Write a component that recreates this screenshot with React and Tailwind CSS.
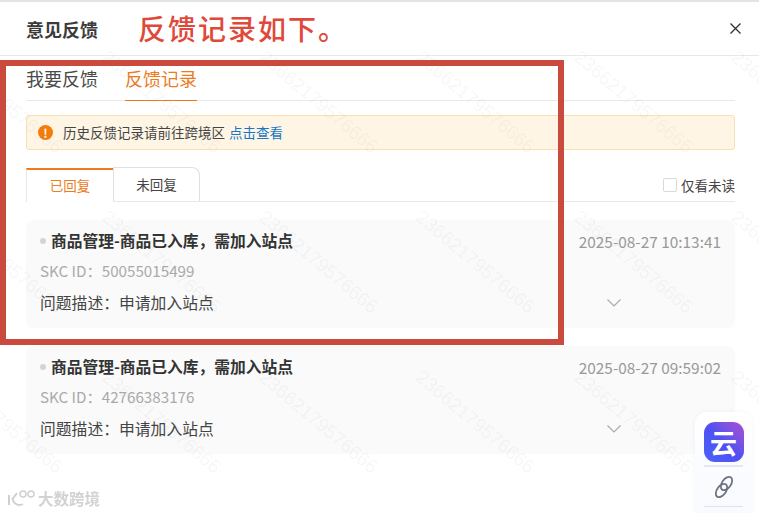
import React from "react";

const cards = [
  { id: "50055015499", time: "2025-08-27 10:13:41" },
  { id: "42766383176", time: "2025-08-27 09:59:02" },
];

// watermark grid: one label every 158px across and 160px down
const marks = [];
[47, 207, 367].forEach((top) => {
  [-47, 111, 268, 425, 583, 740].forEach((left) => marks.push({ top, left }));
});

const FeedbackCard = ({ id, time }) => (
  <div className="h-[108px] rounded-lg bg-[#fafafa] px-[14px] pt-[9px]">
    <div className="flex items-center justify-between">
      <div className="flex items-center">
        <span className="mr-[5px] h-[6px] w-[6px] rounded-full bg-[#d4d4d4]"></span>
        <span className="text-[15.75px] leading-[24px] font-bold text-[#333]">
          {"商品管理-商品已入库\uFF0C需加入站点"}
        </span>
      </div>
      <span className="text-[15.4px] leading-[24px] text-[#999]">{time}</span>
    </div>
    <div className="mt-[7px] text-[15.2px] leading-[20px] text-[#aaa]">
      {"SKC ID\uFF1A"}{id}
    </div>
    <div className="mt-[12px] flex items-center justify-between pr-[100px]">
      <span className="text-[15.8px] leading-[22px] text-[#444]">{"问题描述\uFF1A申请加入站点"}</span>
      <svg width="16" height="10" viewBox="0 0 16 10" fill="none" stroke="#aaa" strokeWidth="1.2" className="mr-[-1px]">
        <path d="M1.5 1.5 8 8l6.5-6.5" />
      </svg>
    </div>
  </div>
);

const App = () => {
  return (
    <div className="relative h-[513px] w-[759px] overflow-hidden border-t-2 border-[#e3e5e3] bg-white font-['Noto_Sans_CJK_SC','Noto_Sans',sans-serif]">
      {/* Header */}
      <div className="flex h-[54px] items-center border-b border-[#e8e8e8] pr-[17px] pl-[26px]">
        <span className="w-[112px] text-[18px] leading-none font-bold text-[#3b3b3b]">意见反馈</span>
        <span className="-mt-[2px] text-[28px] leading-none font-medium tracking-[2px] text-[#e0483a]">反馈记录如下。</span>
        <svg className="ml-auto" width="13" height="13" viewBox="0 0 13 13" stroke="#333" strokeWidth="1.3" fill="none">
          <path d="M1.5 1.5l10 10M11.5 1.5l-10 10" />
        </svg>
      </div>

      <div className="pr-[24px] pl-[26px]">
        {/* Main tabs */}
        <div className="flex h-[45px] border-b border-[#e8e8e8]">
          <div className="mr-[27px] pt-[7px] text-[18px] leading-[30px] text-[#4a4a4a]">我要反馈</div>
          <div className="-mb-px border-b border-[#ee7b1d] pt-[7px] text-[18px] leading-[30px] text-[#ee7b1d]">反馈记录</div>
        </div>

        {/* Notice */}
        <div className="mt-[14px] flex h-[35px] items-center rounded-[3px] border border-[#f8e0b4] bg-[#fef5e5] pl-[11px]">
          <span className="flex h-[15px] w-[15px] items-center justify-center rounded-full bg-[#f57c0a] text-[12px] leading-none font-bold text-white">!</span>
          <span className="ml-[10px] text-[13.5px] text-[#444]">历史反馈记录请前往跨境区</span>
          <span className="ml-[4px] text-[13.5px] text-[#1677c8]">点击查看</span>
        </div>

        {/* Reply tabs */}
        <div className="mt-[18px] flex h-[34px] items-end border-b border-[#e8e8e8]">
          <div className="-mb-px flex h-[34px] w-[87px] items-center justify-center border-t-2 border-l border-[#e8e8e8] border-t-[#ee7b1d] bg-white pb-[2px] text-[13.5px] text-[#ee7b1d]">
            已回复
          </div>
          <div className="flex h-[34px] w-[87px] items-center justify-center rounded-tr-lg border-x border-t border-[#e0e0e0] text-[13.5px] text-[#444]">
            未回复
          </div>
          <div className="mb-[7px] ml-auto flex items-center">
            <span className="h-[14px] w-[14px] rounded-[2px] border border-[#d9d9d9] bg-white"></span>
            <span className="ml-[4px] text-[13.5px] leading-[18px] text-[#444]">仅看未读</span>
          </div>
        </div>

        {/* Records */}
        <div className="mt-[18px] flex flex-col gap-[18px]">
          {cards.map((c) => (
            <FeedbackCard key={c.id} {...c} />
          ))}
        </div>
      </div>

      {/* Watermark */}
      <div className="pointer-events-none absolute inset-0 -top-[2px]">
        {marks.map((m) => (
          <span
            key={`${m.top}-${m.left}`}
            className="absolute origin-top-left rotate-[40deg] font-['Liberation_Sans',sans-serif] text-[19px] leading-none whitespace-nowrap text-[#888]/[0.08]"
            style={{ top: m.top, left: m.left }}
          >
            23662179576666
          </span>
        ))}
      </div>

      {/* Annotation box */}
      <div className="absolute top-[58px] left-0 h-[285px] w-[564px] border-[6px] border-[#cb4a3e]"></div>

      {/* Corner logo */}
      <div className="absolute bottom-[4px] left-[7px] flex items-center text-[#d2d2d2] blur-[0.4px]">
        <svg width="30" height="20" viewBox="0 0 30 20" fill="none" stroke="#d0d0d0" strokeWidth="2">
          <path d="M2 6v10M10 4 5.500 10c1.500 5 6 7.500 10.500 5" />
          <circle cx="16" cy="5" r="3" strokeWidth="1.5" />
          <circle cx="24" cy="5" r="3" strokeWidth="1.5" />
        </svg>
        <span className="ml-[1px] text-[15.5px] leading-none font-bold">大数跨境</span>
      </div>

      {/* Floating tool rail */}
      <div className="absolute right-[7px] bottom-0 flex h-[101px] w-[57px] flex-col items-center rounded-t-xl bg-gradient-to-b from-white to-[#f8faff] pt-[10px] shadow-[0_0_6px_rgba(0,0,0,0.04)]">
        <div className="flex h-[40px] w-[40px] items-center justify-center rounded-[11px] bg-gradient-to-tr from-[#4a62f8] via-[#4f50f2] to-[#ab4bcd] text-[27px] leading-none font-bold text-white">
          云
        </div>
        <div className="mt-[3px] h-[2px] w-[39px] bg-[#e4e6f2]"></div>
        <svg className="mt-[8px]" width="20" height="24" viewBox="0 0 20 24" fill="none" stroke="#6f7280" strokeWidth="1.8">
          <ellipse cx="12.500" cy="8.500" rx="7.500" ry="4.500" transform="rotate(-55 12.500 8.500)" />
          <ellipse cx="7.500" cy="15.500" rx="7.500" ry="4.500" transform="rotate(-55 7.500 15.500)" />
        </svg>
        <div className="mt-[7px] h-px w-[39px] bg-[#dfe3f0]"></div>
      </div>
    </div>
  );
};

export default App;
